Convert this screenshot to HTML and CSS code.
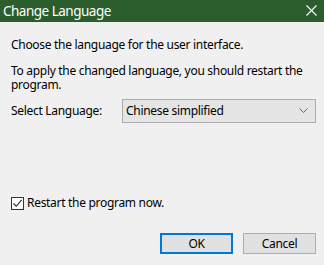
FILE: index.html
```html
<!DOCTYPE html>
<html lang="en">
<head>
    <meta charset="UTF-8">
    <title>Change Language</title>
    <link rel="stylesheet" href="styles.css">
</head>
<body>
    <div class="dialog">
        <div class="titlebar">
            <span class="title">Change Language</span>
            <svg class="close" width="11" height="11" viewBox="0 0 11 11">
                <path d="M0.5 0.5 L10.5 10.5 M10.5 0.5 L0.5 10.5" stroke="#ffffff" stroke-width="1.1" fill="none"/>
            </svg>
        </div>

        <div class="content">
            <p class="intro">Choose the language for the user interface.</p>
            <p class="note">To apply the changed language, you should restart the program.</p>

            <div class="select-row">
                <label class="select-label">Select Language:</label>
                <div class="combo">
                    <span>Chinese simplified</span>
                    <svg width="9" height="6" viewBox="0 0 9 6">
                        <path d="M0.5 0.5 L4.5 4.5 L8.5 0.5" stroke="#606060" stroke-width="1" fill="none"/>
                    </svg>
                </div>
            </div>

            <div class="check-row">
                <span class="checkbox">
                    <svg width="11" height="11" viewBox="0 0 11 11">
                        <path d="M1.5 5.5 L4.2 8.3 L9.7 1.8" stroke="#222" stroke-width="1.1" fill="none"/>
                    </svg>
                </span>
                <span>Restart the program now.</span>
            </div>

            <div class="buttons">
                <button class="btn btn-default">OK</button>
                <button class="btn">Cancel</button>
            </div>
        </div>
    </div>
</body>
</html>
```

FILE: styles.css
```css
* {
    margin: 0;
    padding: 0;
    box-sizing: border-box;
}

body {
    font-family: 'Noto Sans', 'Open Sans', sans-serif;
    font-size: 12px;
    letter-spacing: -0.3px;
    color: #000;
    background-color: #f0f0f0;
    width: 324px;
    height: 265px;
    overflow: hidden;
}

.dialog {
    height: 265px;
    display: flex;
    flex-direction: column;
}

.titlebar {
    height: 22px;
    background-color: #2c5e2d;
    color: #fff;
    display: flex;
    align-items: center;
    justify-content: space-between;
    padding: 0 7px 1px 3px;
}

.title {
    font-size: 13.5px;
    letter-spacing: -0.5px;
    line-height: 20px;
}

.content {
    flex: 1;
    display: flex;
    flex-direction: column;
    padding: 16px 8px 11px 11px;
    line-height: 14px;
}

.note {
    margin-top: 12px;
}

.select-row {
    display: flex;
    align-items: center;
    margin-top: 7px;
}

.select-label {
    width: 111px;
}

.combo {
    flex: 1;
    height: 24px;
    background-color: #e5e5e5;
    border: 1px solid #acacac;
    display: flex;
    align-items: center;
    justify-content: space-between;
    padding: 0 7px 0 3px;
}

.check-row {
    display: flex;
    align-items: center;
    margin-top: 73px;
}

.checkbox {
    width: 13px;
    height: 13px;
    border: 1px solid #333;
    background-color: #fff;
    display: flex;
    align-items: center;
    justify-content: center;
    margin-right: 3px;
}

.buttons {
    margin-top: auto;
    display: flex;
    justify-content: flex-end;
    gap: 10px;
}

.btn {
    width: 73px;
    height: 21px;
    font-family: inherit;
    font-size: 12px;
    letter-spacing: -0.3px;
    background-color: #e1e1e1;
    border: 1px solid #adadad;
    color: #000;
}

.btn-default {
    border: 2px solid #0078d7;
}
```
